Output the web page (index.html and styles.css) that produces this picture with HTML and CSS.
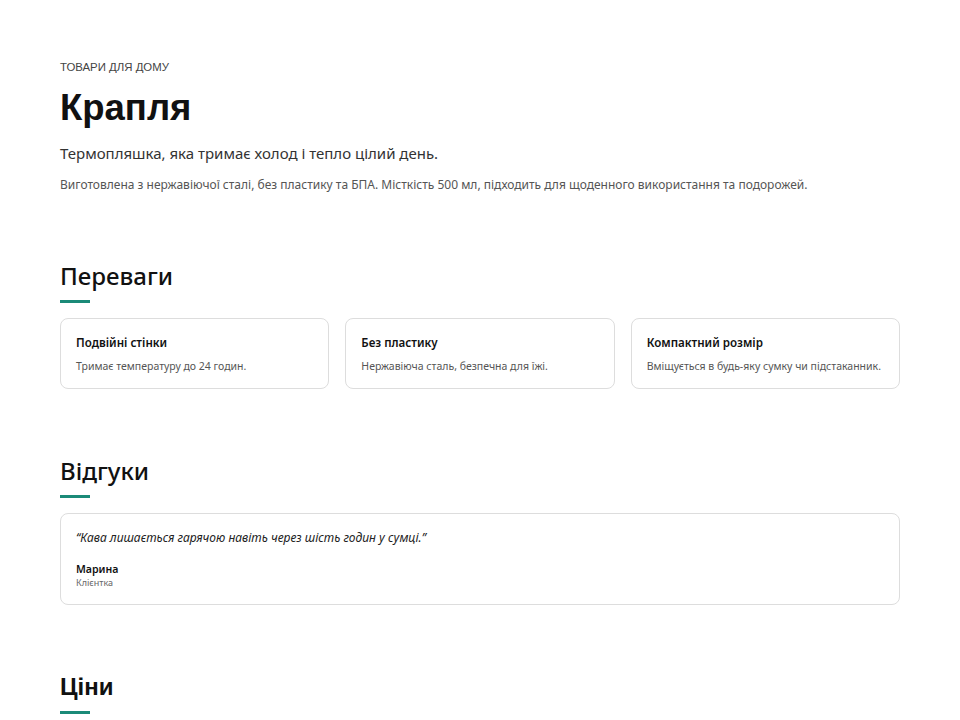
FILE: index.html
```html
<!DOCTYPE html>
<html lang="uk">
<head>
    <meta charset="UTF-8">
    <meta name="viewport" content="width=device-width, initial-scale=1.0">
    <title>Крапля</title>
    <link rel="stylesheet" href="styles.css">
</head>
<body>

    <div class="page">
        <header class="hero">
            <p class="eyebrow">Товари для дому</p>
            <h1>Крапля</h1>
            <p class="lead">Термопляшка, яка тримає холод і тепло цілий день.</p>
            <p class="desc">Виготовлена з нержавіючої сталі, без пластику та БПА. Місткість 500 мл, підходить для щоденного використання та подорожей.</p>
        </header>

        <section class="section">
            <h2>Переваги</h2>
            <div class="line"></div>
            <div class="cards">
                <div class="card">
                    <h3>Подвійні стінки</h3>
                    <p>Тримає температуру до 24 годин.</p>
                </div>
                <div class="card">
                    <h3>Без пластику</h3>
                    <p>Нержавіюча сталь, безпечна для їжі.</p>
                </div>
                <div class="card">
                    <h3>Компактний розмір</h3>
                    <p>Вміщується в будь-яку сумку чи підстаканник.</p>
                </div>
            </div>
        </section>

        <section class="section">
            <h2>Відгуки</h2>
            <div class="line"></div>
            <div class="review">
                <p class="quote">“Кава лишається гарячою навіть через шість годин у сумці.”</p>
                <p class="name">Марина</p>
                <p class="role">Клієнтка</p>
            </div>
        </section>

        <section class="section">
            <h2 class="bold">Ціни</h2>
            <div class="line"></div>
        </section>
    </div>

</body>
</html>
```

FILE: styles.css
```css
body {
    margin: 0;
    font-family: "Noto Sans", sans-serif;
    color: #222;
    background: #fff;
}
p, h1, h2, h3 {
    margin: 0;
}
.page {
    padding: 60px 60px 0;
}
.eyebrow {
    font-family: "Liberation Sans", Arial, sans-serif;
    font-size: 11.4px;
    line-height: 14px;
    text-transform: uppercase;
    color: #444;
}
h1 {
    font-family: "Liberation Sans", Arial, sans-serif;
    font-size: 36.5px;
    line-height: 46px;
    font-weight: bold;
    color: #111;
    margin-top: 11px;
}
.lead {
    font-size: 15px;
    line-height: 24px;
    color: #333;
    margin-top: 10px;
}
.desc {
    font-size: 12px;
    line-height: 18px;
    color: #555;
    margin-top: 11px;
}
.section {
    margin-top: 66px;
}
h2 {
    font-size: 24px;
    line-height: 32px;
    font-weight: 500;
    color: #111;
}
h2.bold {
    font-family: "Liberation Sans", Arial, sans-serif;
    font-weight: bold;
}
.line {
    width: 30px;
    height: 3px;
    background: #1b8a78;
    margin-top: 8px;
}
.cards {
    display: grid;
    grid-template-columns: repeat(3, 1fr);
    gap: 16px;
    margin-top: 15px;
}
.card, .review {
    border: 1px solid #ddd;
    border-radius: 8px;
    padding: 16px 15px 15px;
}
.card h3 {
    font-size: 11.6px;
    line-height: 16px;
    font-weight: 600;
    color: #111;
}
.card p {
    font-size: 10.5px;
    line-height: 14px;
    color: #555;
    margin-top: 8px;
}
.review {
    margin-top: 15px;
    padding-top: 15px;
    padding-bottom: 15px;
}
.quote {
    font-size: 12px;
    line-height: 18px;
    font-style: italic;
    color: #222;
}
.name {
    font-size: 10.6px;
    line-height: 14px;
    font-weight: 600;
    color: #111;
    margin-top: 15px;
}
.role {
    font-size: 9px;
    line-height: 12px;
    color: #666;
    margin-top: 1px;
}
```
